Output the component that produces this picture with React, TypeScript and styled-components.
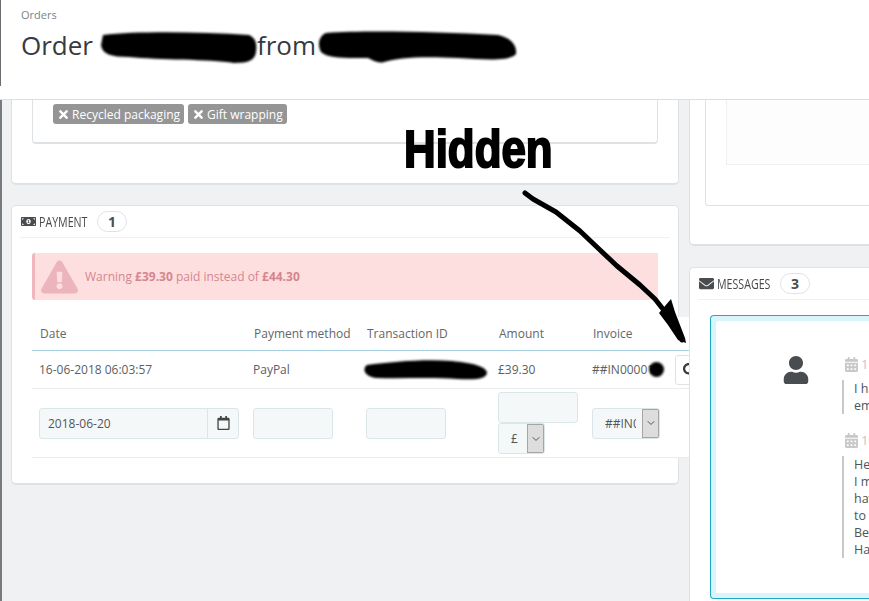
import { FC, ReactNode } from 'react';
import styled, { createGlobalStyle } from 'styled-components';
import {
  FaCalendarAlt,
  FaEnvelope,
  FaExclamationTriangle,
  FaMoneyBillAlt,
  FaRegCalendar,
  FaSearch,
  FaTimes,
  FaUser,
} from 'react-icons/fa';
import { FiChevronDown } from 'react-icons/fi';

const GlobalStyle = createGlobalStyle`
  html, body {
    margin: 0;
    padding: 0;
    background: #eff1f2;
  }
  body {
    font-family: "Open Sans", "Liberation Sans", sans-serif;
    font-size: 12px;
    color: #555;
  }
`;

const Page = styled.div`
  position: relative;
  width: 869px;
  height: 601px;
  overflow: hidden;
  background: #eff1f2;
`;

const Header = styled.header`
  position: relative;
  z-index: 3;
  box-sizing: border-box;
  height: 100px;
  padding: 7px 0 0 21px;
  background: #fff;
  border-bottom: 1px solid #dcdfe1;
  &::before {
    content: '';
    position: absolute;
    left: 0;
    top: 0;
    width: 1px;
    height: 86px;
    background: #6a6e72;
  }
`;

const Crumb = styled.div`
  font-size: 11px;
  line-height: 16px;
  color: #7c8387;
`;

const Title = styled.h1`
  display: flex;
  align-items: center;
  margin: 2px 0 0;
  height: 40px;
  font-size: 26px;
  font-weight: 400;
  color: #363a41;
`;

const Scribble = styled.svg<{ $left?: number; $top?: number }>`
  display: block;
  flex: none;
  overflow: visible;
  filter: blur(1.2px);
  margin-left: ${p => p.$left ?? 0}px;
  margin-top: ${p => p.$top ?? 0}px;
`;

const Body = styled.div`
  display: flex;
  gap: 10px;
  height: 502px;
  padding-left: 11px;
  border-left: 2px solid #777b80;
  box-sizing: border-box;
  margin-top: -1px;
`;

const LeftColumn = styled.div`
  flex: none;
  width: 668px;
  display: flex;
  flex-direction: column;
  gap: 20px;
  margin-left: -2px;
`;

const RightColumn = styled.div`
  position: relative;
  z-index: 1;
  flex: none;
  width: 240px;
  display: flex;
  flex-direction: column;
  gap: 21px;
`;

const Card = styled.section`
  flex: none;
  box-sizing: border-box;
  background: #fff;
  border: 1px solid #dfe2e4;
  border-bottom: 2px solid #dfe2e4;
  border-radius: 5px;
`;

const OptionsCard = styled(Card)`
  border-top: 0;
  border-radius: 0 0 5px 5px;
  height: 86px;
  padding: 0 20px;
`;

const Well = styled.div`
  box-sizing: border-box;
  height: 45px;
  padding: 5px 20px 0;
  border: 1px solid #dfe2e4;
  border-top: 0;
  border-bottom-width: 2px;
  border-radius: 0 0 4px 4px;
  display: flex;
  gap: 4px;
  align-items: flex-start;
`;

const Tag = styled.span`
  display: inline-flex;
  align-items: center;
  gap: 2px;
  height: 20px;
  padding: 0 4px;
  border-radius: 3px;
  background: #959595;
  color: #fff;
  font-size: 12px;
  svg {
    width: 13px;
    height: 13px;
  }
`;

const PaymentCard = styled(Card)`
  height: 280px;
  padding: 0 8px;
`;

const CardHeading = styled.div`
  box-sizing: border-box;
  display: flex;
  align-items: center;
  height: 32px;
  padding-bottom: 1px;
  border-bottom: 1px solid #eff1f2;
  color: #45494d;
  margin-bottom: 15px;
`;

const HeadingIcon = styled.span`
  display: inline-flex;
  margin: 0 3px 0 1px;
  color: #4a4d50;
  svg {
    width: 15px;
    height: 15px;
  }
`;

// no condensed face is installed, so the label is squeezed to its reference width
const HeadingText = styled.span<{ $width: number }>`
  display: inline-block;
  width: ${p => p.$width}px;
  font-size: 15px;
  line-height: 20px;
  white-space: nowrap;
  text-transform: uppercase;
  transform: scaleX(0.71);
  transform-origin: left center;
`;

const Count = styled.span`
  display: inline-flex;
  align-items: center;
  justify-content: center;
  box-sizing: border-box;
  width: 30px;
  height: 21px;
  margin-left: 9px;
  border: 1px solid #dfe2e4;
  border-radius: 11px;
  font-size: 14px;
  font-weight: 700;
  color: #4a4d50;
`;

const Alert = styled.div`
  display: flex;
  align-items: center;
  gap: 7px;
  box-sizing: border-box;
  height: 47px;
  margin: 0 12px;
  padding-left: 6px;
  background: #fddfe0;
  border-left: 3px solid #f0b6bb;
  border-radius: 3px 0 0 3px;
  color: #d6858f;
  font-size: 12px;
  svg {
    width: 37px;
    height: 34px;
    color: #ecb4bb;
  }
`;

const Table = styled.table`
  table-layout: fixed;
  border-collapse: collapse;
  width: 680px;
  margin: 17px 0 0 12px;
  background: #fff;
`;

const Th = styled.th`
  height: 33px;
  padding: 0 8px;
  text-align: left;
  font-weight: 400;
  font-size: 12px;
  color: #666;
  border-bottom: 1px solid #a8d2e2;
`;

const Td = styled.td`
  padding: 0 7px;
  height: 37px;
  color: #5c6063;
  font-size: 12px;
  white-space: nowrap;
  border-bottom: 1px solid #eaecee;
`;

const FormTd = styled(Td)`
  height: 68px;
`;

const Input = styled.div<{ $width?: number }>`
  box-sizing: border-box;
  width: ${p => p.$width ?? 80}px;
  height: 31px;
  display: flex;
  align-items: center;
  background: #f5f8f9;
  border: 1px solid #dbe6e9;
  border-radius: 3px;
  color: #555;
`;

const DateField = styled(Input)`
  padding-left: 8px;
  justify-content: space-between;
`;

const CalendarAddon = styled.span`
  display: flex;
  align-items: center;
  justify-content: center;
  width: 30px;
  height: 100%;
  border-left: 1px solid #dbe6e9;
  color: #444;
  svg {
    width: 13px;
    height: 14px;
  }
`;

const Select = styled(Input)`
  justify-content: space-between;
  overflow: hidden;
`;

const SelectText = styled.span<{ $inset: number; $clip: number }>`
  box-sizing: border-box;
  flex: none;
  width: ${p => p.$clip}px;
  padding-left: ${p => p.$inset}px;
  white-space: nowrap;
  overflow: hidden;
`;

const SelectArrow = styled.span`
  flex: none;
  box-sizing: border-box;
  display: flex;
  align-items: center;
  justify-content: center;
  width: 17px;
  height: 100%;
  background: #dddddd;
  border: 1px solid #a5a5a5;
  svg {
    width: 12px;
    height: 12px;
    color: #555;
  }
`;

const AmountStack = styled.div`
  display: flex;
  flex-direction: column;
`;

const RowButton = styled.span`
  display: flex;
  align-items: center;
  box-sizing: border-box;
  width: 40px;
  height: 30px;
  padding-left: 7px;
  background: #fff;
  border: 1px solid #dfe2e4;
  border-radius: 3px;
  color: #363a41;
  svg {
    width: 14px;
    height: 14px;
  }
`;

const InvoiceCell = styled.span`
  display: inline-flex;
  align-items: center;
`;

const InvoiceDot = styled.span`
  display: inline-block;
  width: 15px;
  height: 15px;
  margin-left: -5px;
  border-radius: 50%;
  background: #000;
  filter: blur(1px);
`;

const RightTopCard = styled(Card)`
  border-top: 0;
  border-right: 0;
  border-radius: 0 0 0 5px;
  height: 147px;
  padding-left: 15px;
`;

const RightWell = styled.div`
  box-sizing: border-box;
  height: 107px;
  padding-left: 20px;
  border: 1px solid #dfe2e4;
  border-top: 0;
  border-right: 0;
  border-radius: 0 0 0 3px;
`;

const RightInner = styled.div`
  height: 65px;
  background: #fdfdfe;
  border: 1px solid #eef0f2;
  border-top: 0;
  border-right: 0;
`;

const MessagesCard = styled(Card)`
  border-right: 0;
  border-radius: 5px 0 0 5px;
  height: 340px;
  padding: 0 0 0 8px;
`;

const MessagePanel = styled.div`
  box-sizing: border-box;
  height: 284px;
  margin-left: 12px;
  display: flex;
  gap: 33px;
  padding: 40px 0 0 72px;
  background: #fff;
  border: 1px solid #1fa9c8;
  border-right: 0;
  border-radius: 4px 0 0 4px;
  box-shadow: inset 5px 5px 0 #d9f4fb, inset 0 -5px 0 #d9f4fb;
`;

const Avatar = styled.div`
  flex: none;
  color: #4a4d50;
  svg {
    display: block;
    width: 26px;
    height: 28px;
  }
`;

const Thread = styled.div`
  flex: 1;
  min-width: 0;
  overflow: hidden;
`;

const MessageDate = styled.div`
  display: flex;
  align-items: center;
  gap: 3px;
  height: 16px;
  padding-left: 3px;
  color: #c6c6c6;
  font-size: 13px;
  white-space: nowrap;
  svg {
    width: 13px;
    height: 15px;
    color: #c8c8c8;
  }
`;

const Quote = styled.blockquote`
  margin: 8px 0 18px 0;
  padding-left: 10px;
  border-left: 2px solid #c9c9c9;
  font-size: 12.5px;
  line-height: 17px;
  color: #4f5458;
  white-space: nowrap;
`;

const HiddenLabel = styled.div`
  position: absolute;
  z-index: 5;
  left: 404px;
  top: 122px;
  font-family: "Liberation Sans", Arial, sans-serif;
  font-size: 51px;
  line-height: 56px;
  font-weight: 700;
  color: #000;
  -webkit-text-stroke: 2px #000;
  transform: scaleX(0.86);
  transform-origin: left center;
`;

const ArrowDrawing = styled.svg`
  position: absolute;
  z-index: 5;
  left: 0;
  top: 0;
  pointer-events: none;
`;

const Money: FC<{ children: ReactNode }> = ({ children }) => <strong>{children}</strong>;

const App: FC = () => (
  <Page>
    <GlobalStyle />
    <Header>
      <Crumb>Orders</Crumb>
      <Title>
        Order
        <Scribble width="158" height="34" $left={6} $top={4}>
          <path d="M4 5 C40 1 100 2 150 5 C157 8 158 14 157 22 C156 30 150 33 135 33 C110 29 60 30 30 27 C12 27 3 24 2 15 Z" fill="#000" />
        </Scribble>
        from
        <Scribble width="198" height="33" $left={2} $top={2}>
          <path d="M8 3 C50 0 120 2 180 5 C194 8 199 16 198 24 C192 31 170 30 140 28 C100 26 80 28 66 32 C60 34 55 30 50 28 C30 28 10 29 3 22 C-1 14 1 6 8 3 Z" fill="#000" />
        </Scribble>
      </Title>
    </Header>
    <Body>
      <LeftColumn>
        <OptionsCard>
          <Well>
            <Tag>
              <FaTimes /> Recycled packaging
            </Tag>
            <Tag>
              <FaTimes /> Gift wrapping
            </Tag>
          </Well>
        </OptionsCard>
        <PaymentCard>
          <CardHeading>
            <HeadingIcon>
              <FaMoneyBillAlt />
            </HeadingIcon>
            <HeadingText $width={49}>Payment</HeadingText>
            <Count>1</Count>
          </CardHeading>
          <Alert>
            <FaExclamationTriangle />
            <span>
              Warning <Money>£39.30</Money> paid instead of <Money>£44.30</Money>
            </span>
          </Alert>
          <Table>
            <colgroup>
              <col style={{ width: 214 }} />
              <col style={{ width: 113 }} />
              <col style={{ width: 132 }} />
              <col style={{ width: 94 }} />
              <col style={{ width: 83 }} />
              <col style={{ width: 44 }} />
            </colgroup>
            <thead>
              <tr>
                <Th>Date</Th>
                <Th>Payment method</Th>
                <Th>Transaction ID</Th>
                <Th>Amount</Th>
                <Th>Invoice</Th>
                <Th />
              </tr>
            </thead>
            <tbody>
              <tr>
                <Td>16-06-2018 06:03:57</Td>
                <Td>PayPal</Td>
                <Td>
                  <Scribble width="125" height="21" $left={-4}>
                    <path d="M5 6 C30 3 60 0 90 2 C110 4 123 7 125 13 C125 20 115 21 95 20 C70 18 40 20 15 19 C4 18 -1 11 5 6 Z" fill="#000" />
                  </Scribble>
                </Td>
                <Td>£39.30</Td>
                <Td>
                  <InvoiceCell>
                    ##IN00001
                    <InvoiceDot />
                  </InvoiceCell>
                </Td>
                <Td>
                  <RowButton>
                    <FaSearch />
                  </RowButton>
                </Td>
              </tr>
              <tr>
                <FormTd>
                  <DateField $width={200}>
                    2018-06-20
                    <CalendarAddon>
                      <FaRegCalendar />
                    </CalendarAddon>
                  </DateField>
                </FormTd>
                <FormTd>
                  <Input />
                </FormTd>
                <FormTd>
                  <Input />
                </FormTd>
                <FormTd>
                  <AmountStack>
                    <Input />
                    <Select $width={47}>
                      <SelectText $inset={12} $clip={28}>£</SelectText>
                      <SelectArrow>
                        <FiChevronDown />
                      </SelectArrow>
                    </Select>
                  </AmountStack>
                </FormTd>
                <FormTd>
                  <Select $width={68}>
                    <SelectText $inset={12} $clip={43}>##IN0</SelectText>
                    <SelectArrow>
                      <FiChevronDown />
                    </SelectArrow>
                  </Select>
                </FormTd>
                <FormTd />
              </tr>
            </tbody>
          </Table>
        </PaymentCard>
      </LeftColumn>
      <RightColumn>
        <RightTopCard>
          <RightWell>
            <RightInner />
          </RightWell>
        </RightTopCard>
        <MessagesCard>
          <CardHeading>
            <HeadingIcon>
              <FaEnvelope />
            </HeadingIcon>
            <HeadingText $width={54}>Messages</HeadingText>
            <Count>3</Count>
          </CardHeading>
          <MessagePanel>
            <Avatar>
              <FaUser />
            </Avatar>
            <Thread>
              <MessageDate>
                <FaCalendarAlt /> 19-06-2018
              </MessageDate>
              <Quote>
                I have sent you an
                <br />
                email
              </Quote>
              <MessageDate>
                <FaCalendarAlt /> 18-06-2018
              </MessageDate>
              <Quote>
                Hello,
                <br />
                I made an order
                <br />
                have a voucher
                <br />
                to apply
                <br />
                Best regards,
                <br />
                Hannah
              </Quote>
            </Thread>
          </MessagePanel>
        </MessagesCard>
      </RightColumn>
    </Body>
    <HiddenLabel>Hidden</HiddenLabel>
    <ArrowDrawing width="869" height="601" viewBox="0 0 869 601">
      <path
        d="M525 193 L533 199 L556 212 L580 231 L600 250 L617 266 L640 285 L655 299 L670 318 L682 340"
        fill="none"
        stroke="#000"
        strokeWidth="5"
        strokeLinecap="round"
        strokeLinejoin="round"
      />
      <path d="M659 313 L671 299 L675 312 L685 338 L686 343 L678 340 L668 325 Z" fill="#000" />
    </ArrowDrawing>
  </Page>
);

export default App;
